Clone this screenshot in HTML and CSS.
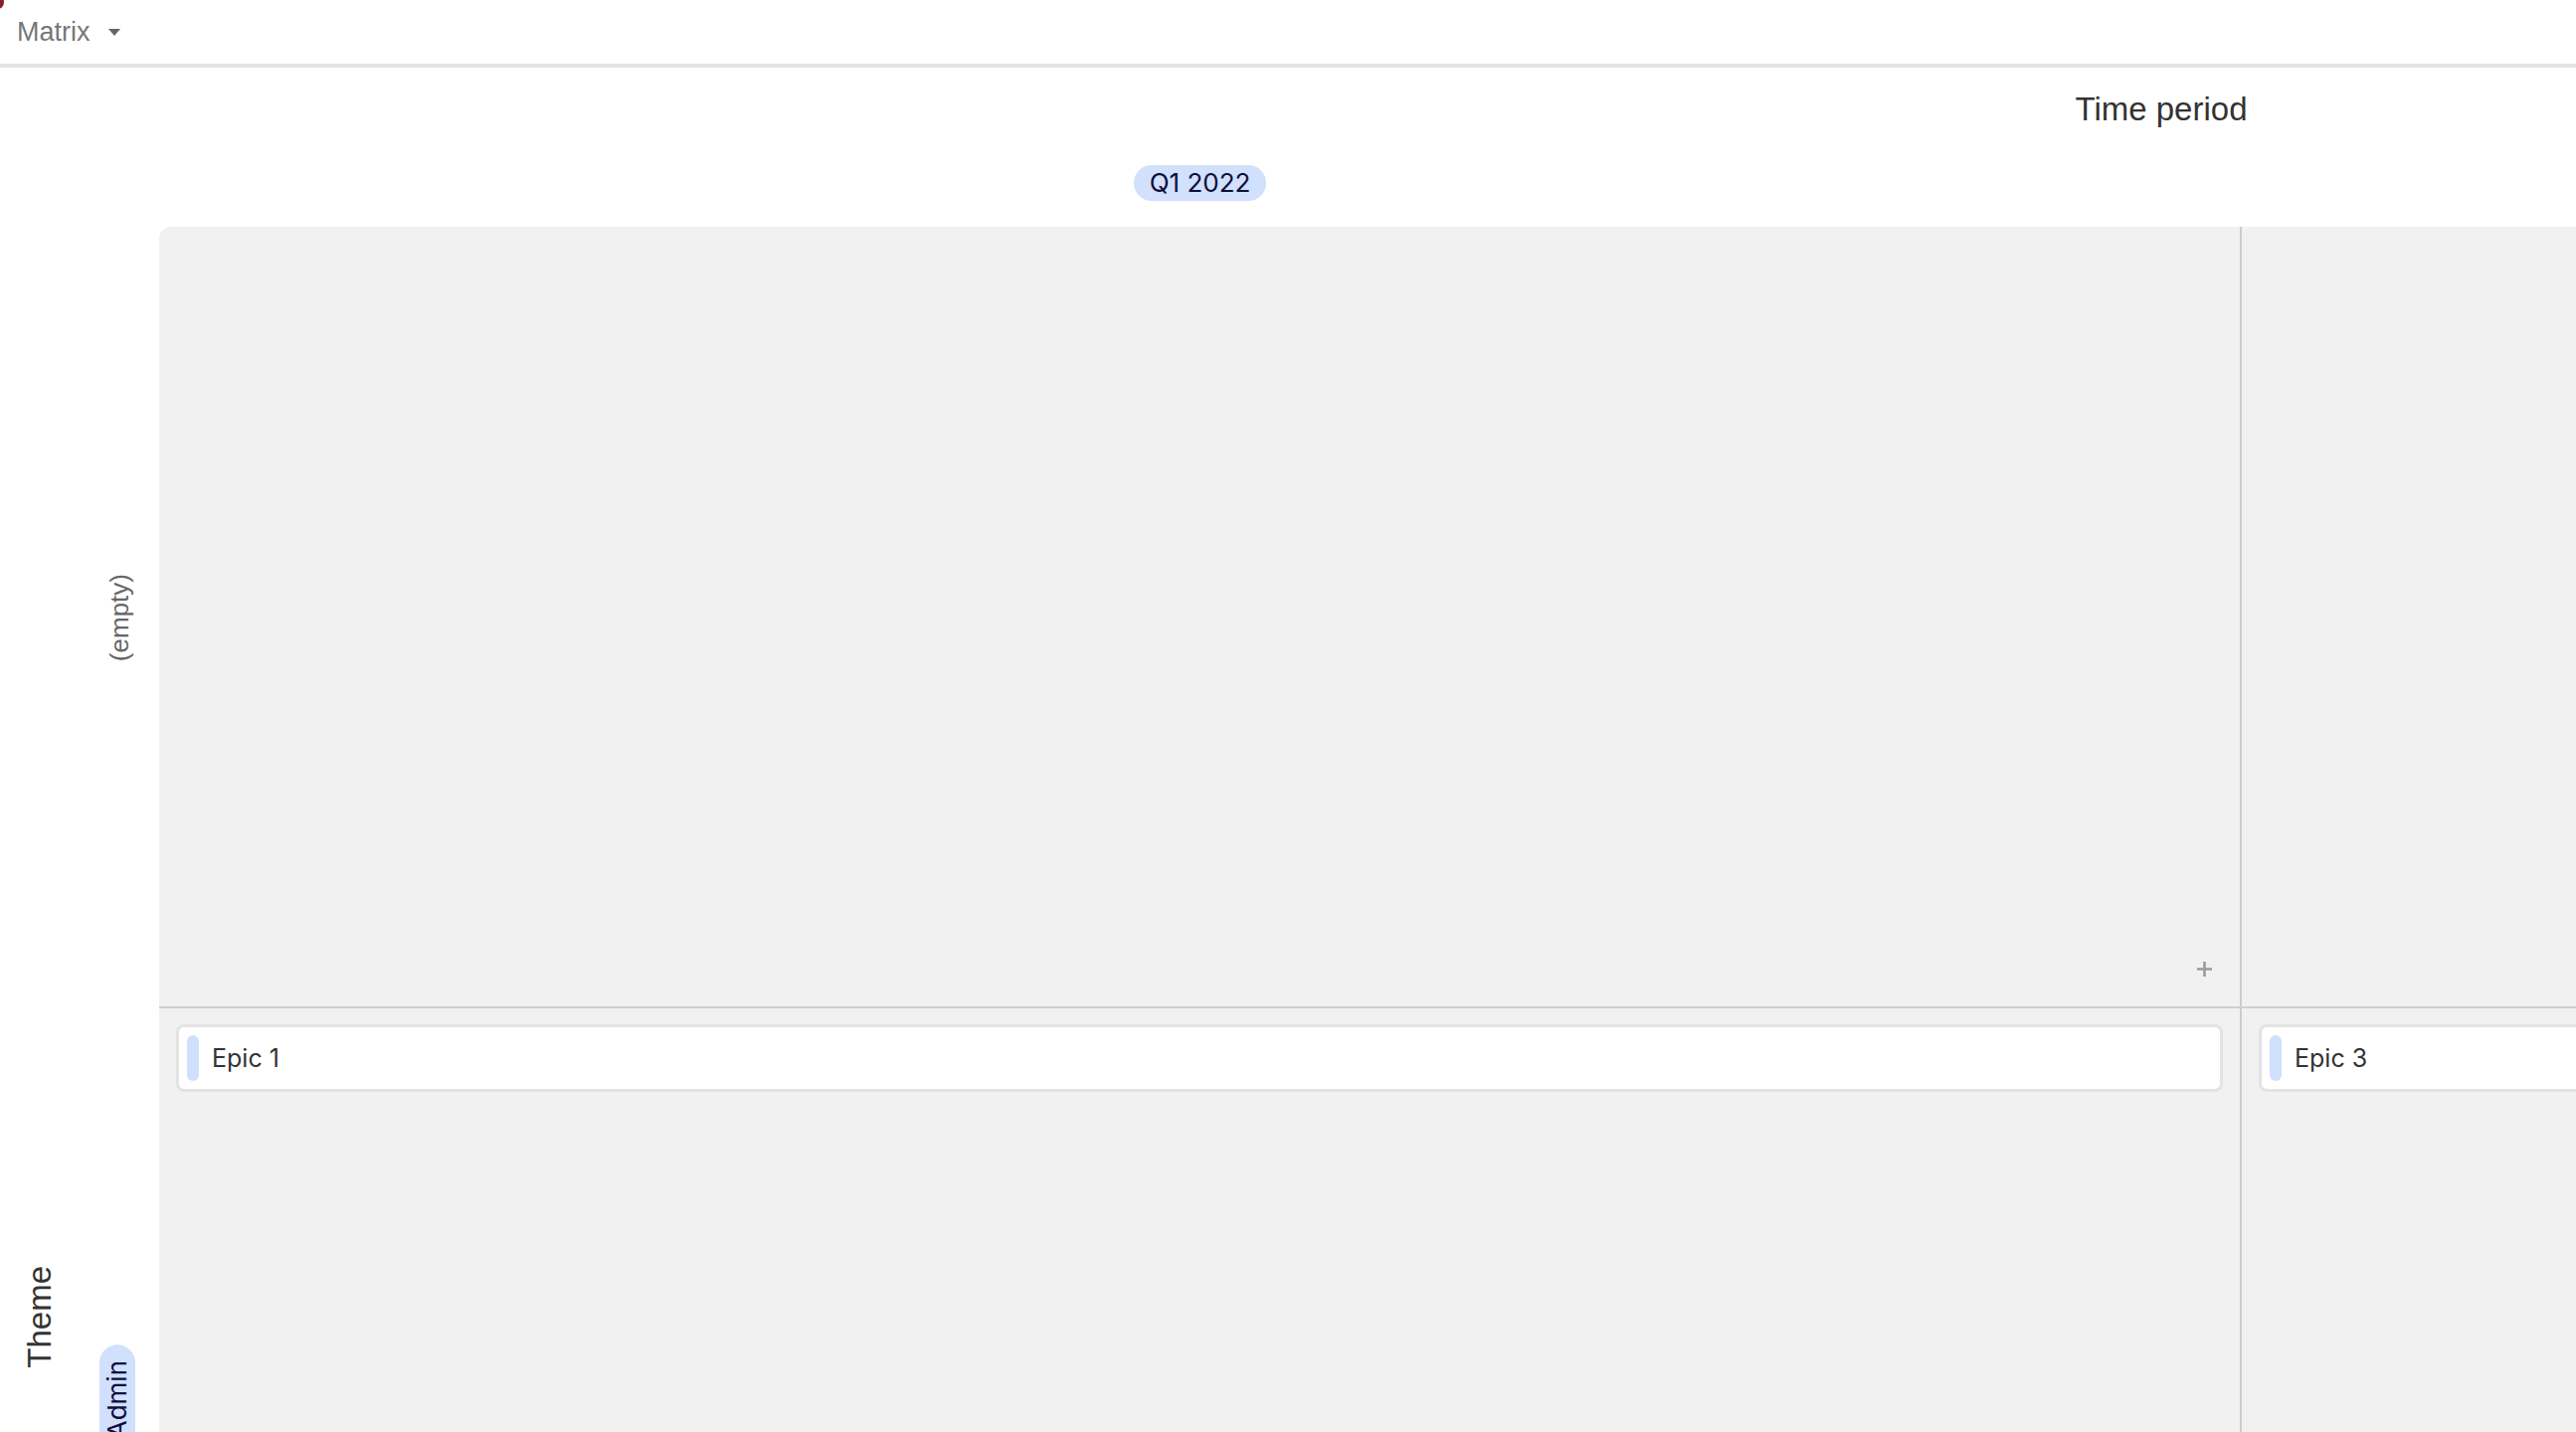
FILE: index.html
```html
<!DOCTYPE html>
<html lang="en">
<head>
  <meta charset="UTF-8" />
  <title>Matrix</title>
  <link rel="stylesheet" href="styles.css">
</head>
<body>
  <div class="corner-dot"></div>

  <div class="topbar">
    <span class="view-name">Matrix</span>
    <span class="caret"></span>
  </div>

  <div class="board">
    <div class="x-title">Time period</div>

    <div class="col-heads">
      <div class="col-head"><span class="pill">Q1 2022</span></div>
      <div class="col-head"></div>
    </div>

    <div class="board-body">
      <div class="y-title"><span class="vertical">Theme</span></div>

      <div class="row-labels">
        <div class="row-label"><span class="vertical muted">(empty)</span></div>
        <div class="row-label row-label-pill"><span class="vertical pill">Admin</span></div>
      </div>

      <div class="grid">
        <div class="cell cell-first cell-top cell-add">
          <svg class="add" viewBox="0 0 17 17" width="17" height="17">
            <path d="M8.5 1v15M1 8.5h15" stroke="#9b9b9b" stroke-width="2.6" fill="none"/>
          </svg>
        </div>
        <div class="cell cell-top"></div>

        <div class="cell cell-first">
          <div class="card">
            <span class="card-bar"></span>
            <span class="card-title">Epic 1</span>
          </div>
        </div>
        <div class="cell">
          <div class="card">
            <span class="card-bar"></span>
            <span class="card-title">Epic 3</span>
          </div>
        </div>
      </div>
    </div>
  </div>
</body>
</html>
```

FILE: styles.css
```css
body {
  margin: 0;
  font-family: "Liberation Sans", Arial, sans-serif;
  background: #fff;
  color: #333;
  overflow: hidden;
}

.corner-dot {
  position: absolute;
  left: -8px;
  top: -5px;
  width: 12px;
  height: 14px;
  border-radius: 50%;
  background: #8c1d2f;
}

.topbar {
  height: 64px;
  border-bottom: 4px solid #e4e4e4;
  display: flex;
  align-items: center;
  padding-left: 17px;
}

.view-name {
  font-size: 27px;
  color: #777;
}

.caret {
  margin-left: 18px;
  margin-top: 1px;
  width: 0;
  height: 0;
  border-left: 6px solid transparent;
  border-right: 6px solid transparent;
  border-top: 7px solid #666;
}

.board {
  width: 4346px;
}

.x-title {
  text-align: center;
  font-size: 33px;
  line-height: 40px;
  color: #333;
  padding-top: 22px;
}

.col-heads {
  display: flex;
  padding-left: 160px;
  margin-top: 36px;
  margin-bottom: 26px;
}

.col-head {
  width: 2093px;
  display: flex;
  justify-content: center;
}

.pill {
  display: inline-block;
  font-family: Inter, "Liberation Sans", sans-serif;
  font-size: 26px;
  line-height: 36px;
  padding: 0 16px;
  border-radius: 18px;
  background: #d0e0fd;
  color: #0e0e3c;
}

.board-body {
  display: flex;
}

.y-title {
  width: 80px;
  padding-top: 1045px;
  display: flex;
  justify-content: center;
  align-items: flex-start;
  font-size: 33px;
  color: #333;
}

.vertical {
  writing-mode: vertical-rl;
  transform: rotate(180deg);
}

.vertical.pill {
  padding: 16px 0;
  line-height: 36px;
}

.muted {
  font-size: 26px;
  color: #666;
}

.row-labels {
  width: 80px;
  display: flex;
  flex-direction: column;
}

.row-label {
  height: 786px;
  display: flex;
  align-items: center;
  justify-content: center;
}

.row-label-pill {
  padding-right: 4px;
}

.grid {
  display: grid;
  grid-template-columns: 2094px 2092px;
  grid-template-rows: 786px 786px;
  background: #f1f1f1;
  border-top-left-radius: 12px;
}

.cell {
  padding: 16px 17px;
}

.cell-first {
  border-right: 2px solid #cccccc;
}

.cell-top {
  border-bottom: 2px solid #cfcfcf;
}

.cell-add {
  display: flex;
  align-items: flex-end;
  justify-content: flex-end;
  padding: 0 27px 29px 0;
}

.card {
  background: #fff;
  border: 3px solid #e3e3e3;
  border-radius: 8px;
  padding: 8px;
  display: flex;
  align-items: center;
  gap: 13px;
}

.card-bar {
  width: 12px;
  height: 46px;
  border-radius: 6px;
  background: #cfe0fc;
}

.card-title {
  font-family: Inter, "Liberation Sans", sans-serif;
  font-size: 25px;
  color: #333;
}
```
